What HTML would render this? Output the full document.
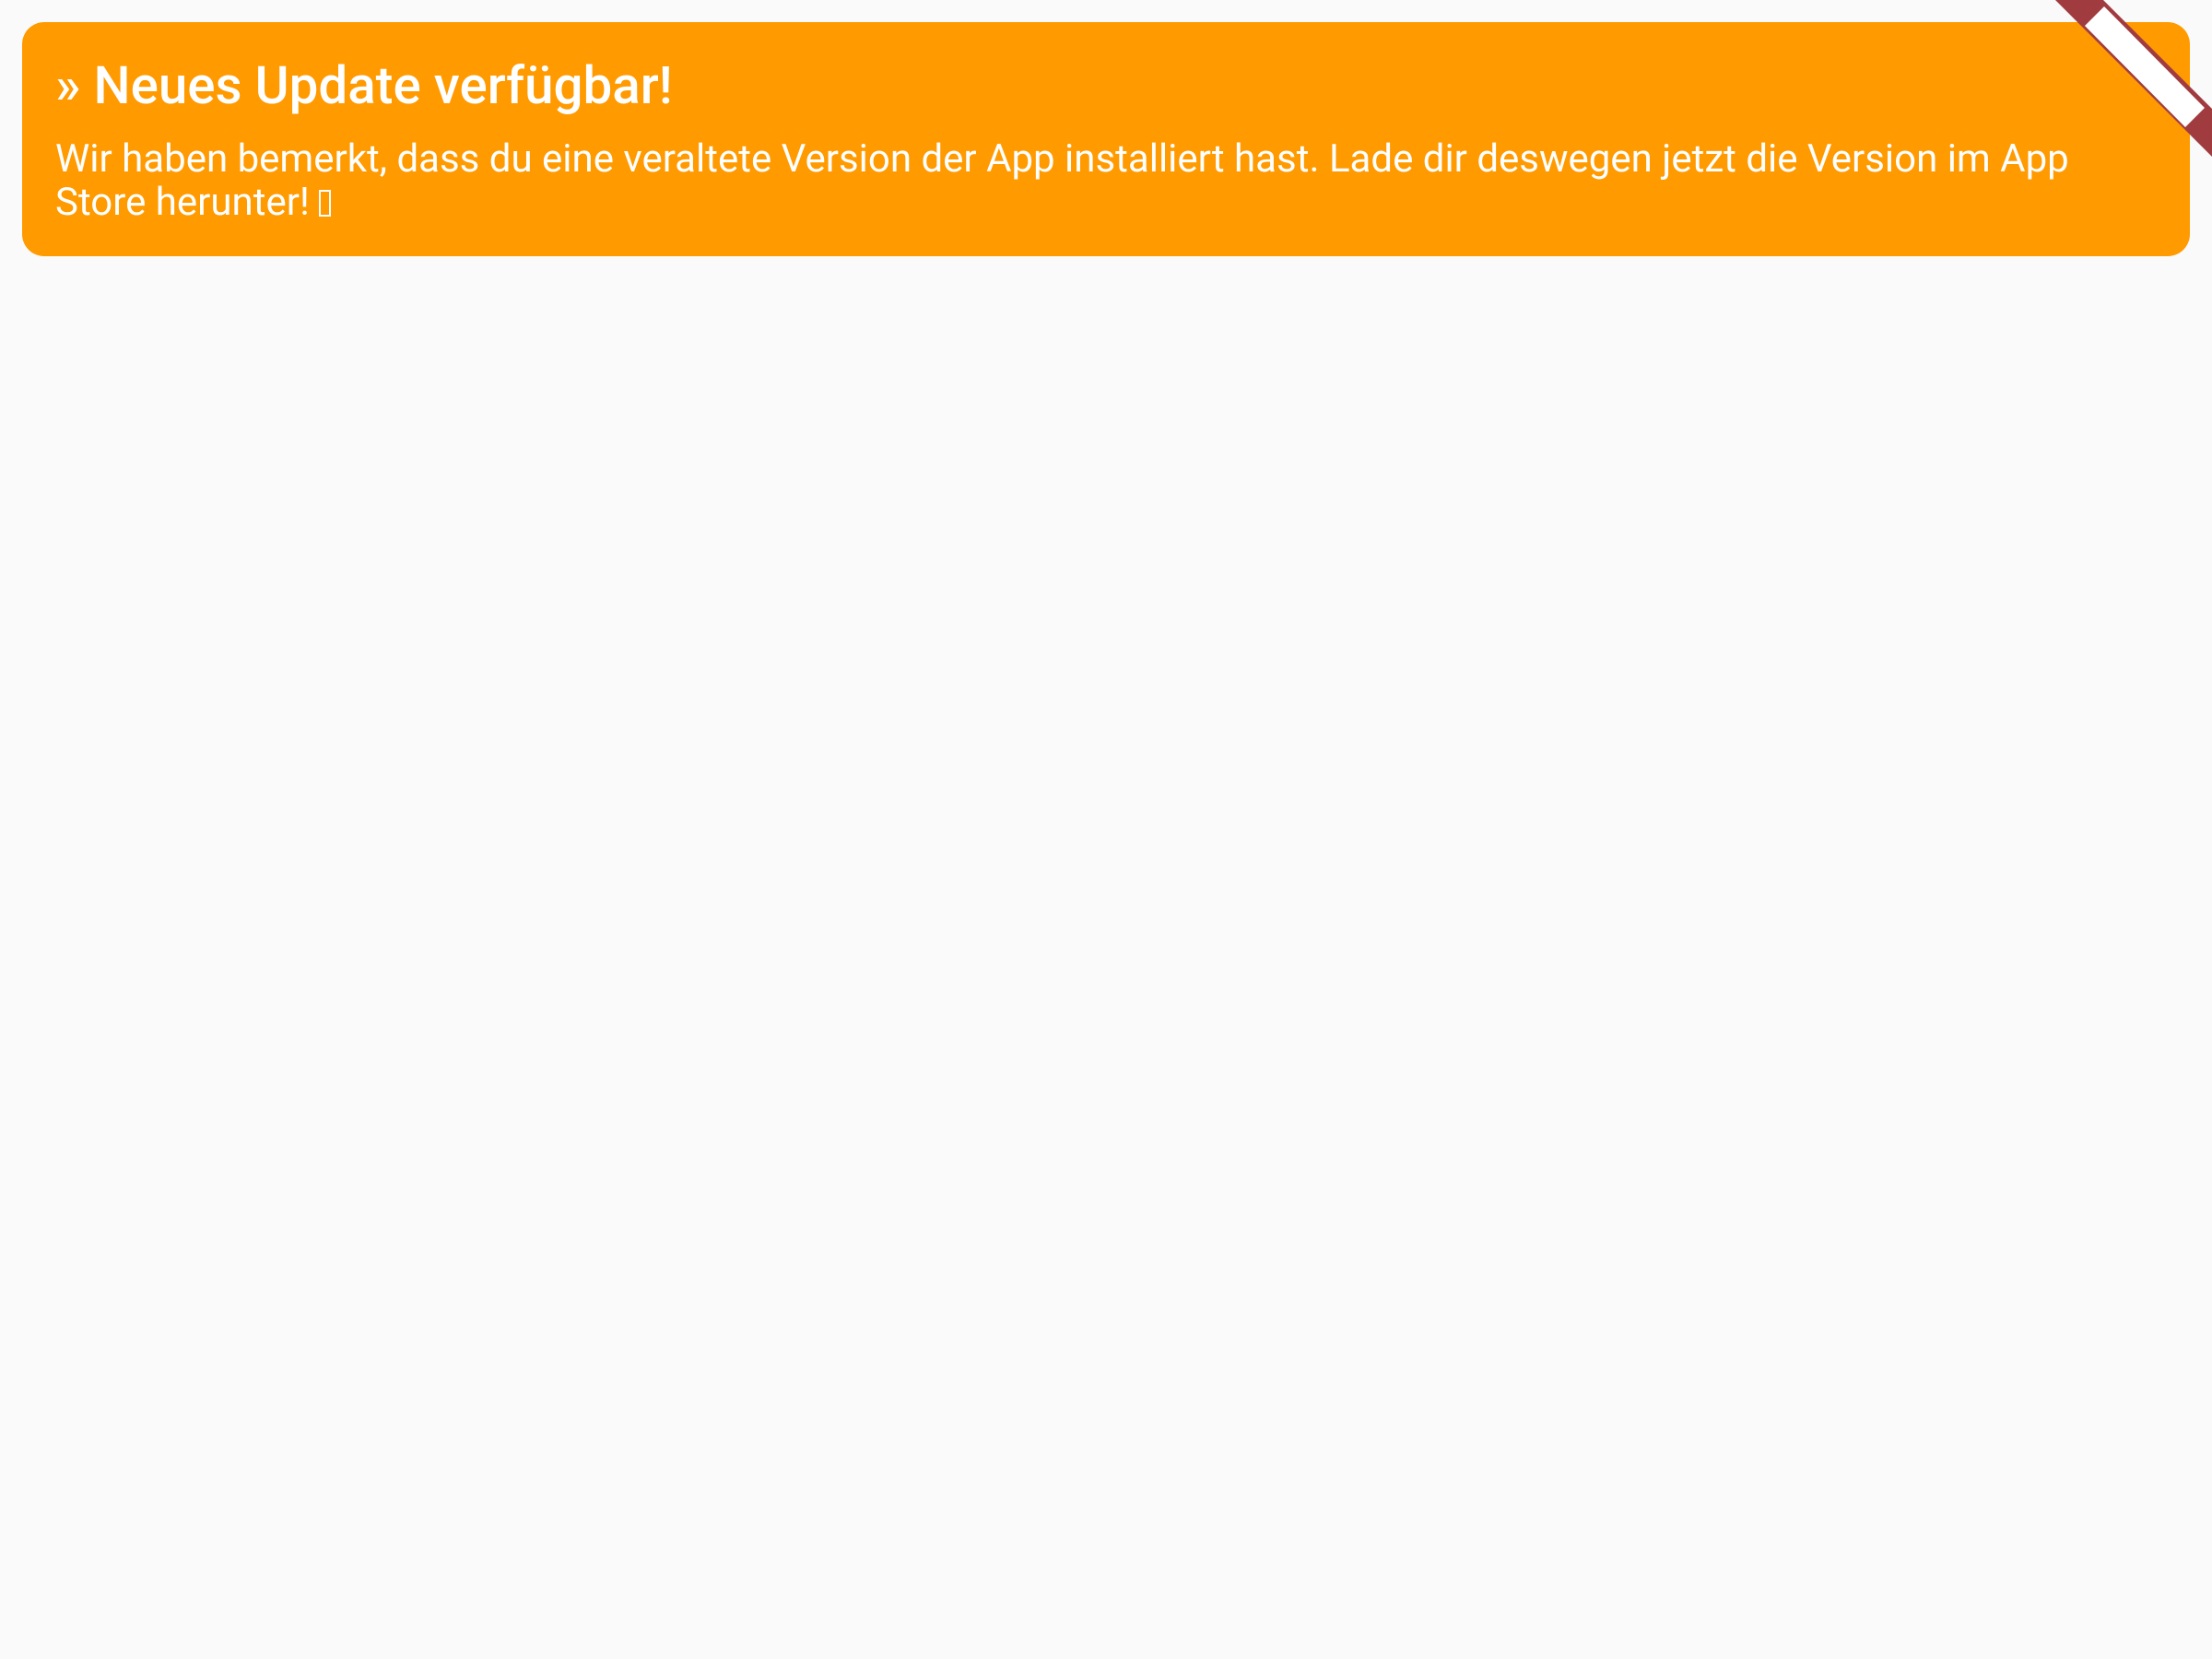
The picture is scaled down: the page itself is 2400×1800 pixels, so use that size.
<!DOCTYPE html>
<html><head><meta charset="utf-8"><style>
html,body{margin:0;padding:0;}
body{width:2400px;height:1800px;background:#fafafa;position:relative;overflow:hidden;font-family:"Roboto","Liberation Sans",sans-serif;}
.card{position:absolute;left:24px;top:24px;width:2352px;height:254px;background:#ff9a00;border-radius:24px;color:#fff;}
h1{position:absolute;left:36px;top:34px;margin:0;font-size:56.5px;line-height:70px;font-weight:500;white-space:nowrap;}
p{position:absolute;left:36px;top:125px;margin:0;font-size:42px;line-height:47px;white-space:nowrap;}
svg{position:absolute;left:0;top:0;}
</style></head><body>
<div class="card">
<h1>» Neues Update verfügbar!</h1>
<p>Wir haben bemerkt, dass du eine veraltete Version der App installiert hast. Lade dir deswegen jetzt die Version im App<br>Store herunter! <span style="display:inline-block;width:13px;height:29px;border:2px solid #fff;box-sizing:border-box;vertical-align:-2px"></span></p>
</div>
<svg width="2400" height="1800" viewBox="0 0 2400 1800">
<polygon points="2230,0 2282,0 2400,118 2400,170" fill="#a03c40"/>
<polygon points="2262,28 2283,7 2392,117 2371,138" fill="#ffffff"/>
</svg>
</body></html>
